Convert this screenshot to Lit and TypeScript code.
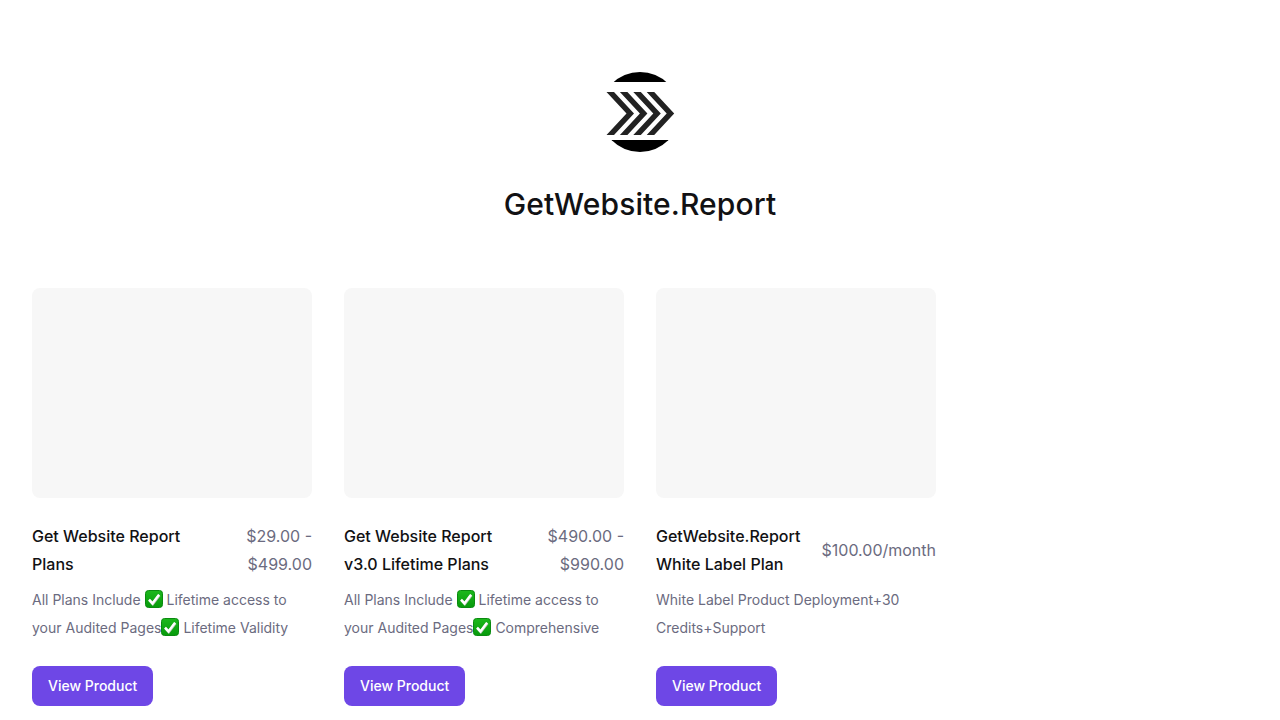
import { LitElement, html, css, svg } from "lit";
import { customElement } from "lit/decorators.js";

const check = html`<svg class="check" viewBox="0 0 18 18" aria-hidden="true"><defs><linearGradient id="g" x1="0" y1="0" x2="0" y2="1"><stop offset="0" stop-color="#1cb81c"/><stop offset="1" stop-color="#069a0b"/></linearGradient></defs><rect x="0.5" y="0.5" width="17" height="17" rx="3" fill="url(#g)" stroke="#0a8a10" stroke-width="1"/><path d="M4 9.6 7.4 13.4 14 4.6" fill="none" stroke="#b9c4b9" stroke-width="2.6" transform="translate(0.4 0.5)"/><path d="M4 9.6 7.4 13.4 14 4.6" fill="none" stroke="#fff" stroke-width="2.4"/></svg>`;

const products = [
  { name: "Get Website Report Plans", price: "$29.00 - $499.00", desc: html`All Plans Include ${check} Lifetime access to your Audited Pages${check} Lifetime Validity` },
  { name: "Get Website Report v3.0 Lifetime Plans", price: "$490.00 - $990.00", desc: html`All Plans Include ${check} Lifetime access to your Audited Pages${check} Comprehensive` },
  { name: "GetWebsite.Report White Label Plan", price: "$100.00/month", desc: html`White Label Product Deployment+30 Credits+Support` },
];

const chevrons = [0, 1, 2, 3].map((i) => {
  const x = 6.5 + i * 13.4;
  return svg`<path d="M${x} 20 L${x + 20} 41.5 L${x} 63 H${x + 7.5} L${x + 27.5} 41.5 L${x + 7.5} 20 Z" fill="#222"/>`;
});

@customElement("app-root")
export class AppRoot extends LitElement {
  static styles = css`
    :host { display: block; font-family: Inter, "Liberation Sans", sans-serif; font-optical-sizing: none; background: #fff; color: #111113; }
    .page { padding: 72px 32px 14px; }
    .brand { display: flex; flex-direction: column; align-items: center; }
    .logo { display: block; width: 80px; height: 80px; }
    h1 { margin: 32px 0 64px; font-size: 30px; line-height: 40px; font-weight: 450; letter-spacing: 0.1px; }
    .grid { display: grid; grid-template-columns: repeat(4, 1fr); gap: 32px; }
    .thumb { height: 210px; border-radius: 8px; background: #f7f7f7; margin-bottom: 24px; }
    .head { display: flex; justify-content: space-between; align-items: center; gap: 8px; font-size: 16px; line-height: 28px; }
    .name { flex: 1 1 0; font-weight: 500; color: #111113; }
    .price { color: #6b6b80; text-align: right; flex: none; max-width: 120px; }
    .desc { margin: 8px 0 24px; font-size: 14px; line-height: 28px; height: 56px; overflow: hidden; color: #6b6b80; }
    .check { display: inline-block; width: 18px; height: 18px; vertical-align: -3px; }
    .btn { display: inline-flex; align-items: center; height: 40px; padding: 0 16px; border: 0; border-radius: 8px; background: #6e47e6; color: #fff; font: 500 14px/20px Inter, "Liberation Sans", sans-serif; font-optical-sizing: none; }
  `;

  render() {
    return html`<div class="page">
      <header class="brand">
        <svg class="logo" viewBox="0 0 80 80" role="img" aria-label="GetWebsite.Report logo">
          <circle cx="40" cy="40" r="40" fill="#000"/>
          <rect x="0" y="10" width="80" height="58" fill="#fff"/>
          ${chevrons}
        </svg>
        <h1>GetWebsite.Report</h1>
      </header>
      <section class="grid">
        ${products.map((p) => html`<article>
          <div class="thumb"></div>
          <div class="head"><div class="name">${p.name}</div><div class="price">${p.price}</div></div>
          <p class="desc">${p.desc}</p>
          <button class="btn">View Product</button>
        </article>`)}
      </section>
    </div>`;
  }
}
